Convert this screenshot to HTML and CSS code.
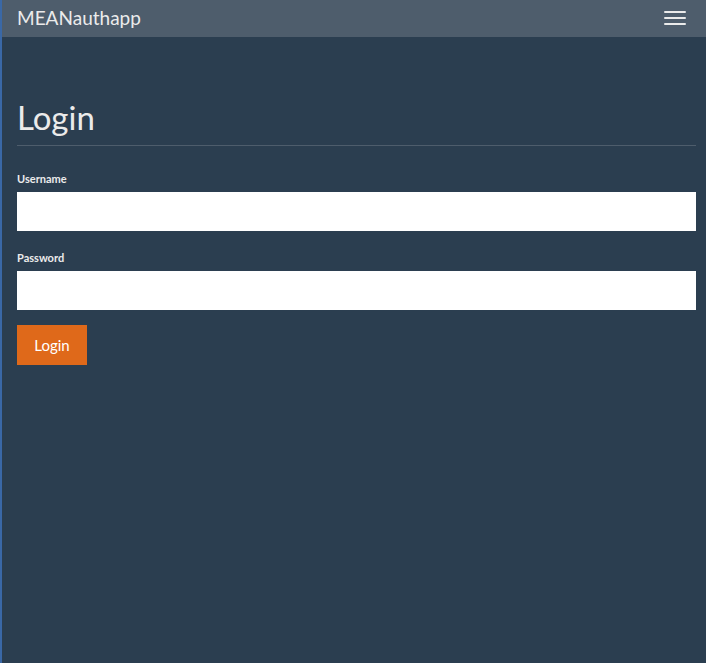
FILE: index.html
```html
<!DOCTYPE html>
<html>
<head>
<meta charset="utf-8">
<link rel="stylesheet" href="styles.css">
</head>
<body>
<div class="page">
  <nav class="navbar">
    <span class="brand">MEANauthapp</span>
    <button class="toggle" aria-label="menu"><span></span><span></span><span></span></button>
  </nav>
  <main class="content">
    <h1 class="title">Login</h1>
    <form class="form">
      <label class="label">Username</label>
      <input class="input" type="text">
      <label class="label">Password</label>
      <input class="input" type="password">
      <button class="btn" type="button">Login</button>
    </form>
  </main>
</div>
</body>
</html>
```
FILE: styles.css
```css
html, body { margin: 0; padding: 0; height: 100%; }
body {
  background: #2b3e50;
  font-family: Lato, "Open Sans", sans-serif;
  color: #ebebeb;
}
.page {
  min-height: 100%;
  border-left: 2px solid #3a68a6;
  box-sizing: border-box;
}
.navbar {
  height: 37px;
  background: #4e5d6c;
  display: flex;
  align-items: center;
  justify-content: space-between;
  padding: 0 20px 0 15px;
}
.brand {
  font-size: 19px;
  color: #ebebeb;
  padding-bottom: 2px;
}
.toggle {
  background: none;
  border: 0;
  padding: 0;
  width: 22px;
  display: flex;
  flex-direction: column;
  gap: 4px;
  margin-bottom: 1px;
}
.toggle span {
  display: block;
  height: 2px;
  background: #ebebeb;
  border-radius: 1px;
}
.content {
  padding: 0 10px 0 15px;
}
.title {
  font-size: 33px;
  font-weight: 400;
  margin: 62px 0 0;
  padding-bottom: 10px;
  line-height: 1.1;
  border-bottom: 1px solid #4e5d6c;
}
.form {
  display: flex;
  flex-direction: column;
  align-items: flex-start;
  padding-top: 25px;
}
.label {
  font-size: 11px;
  font-weight: 700;
  margin-bottom: 6px;
  line-height: 15px;
}
.input {
  width: 100%;
  box-sizing: border-box;
  height: 39px;
  border: 0;
  border-radius: 0;
  background: #fff;
  margin-bottom: 19px;
  padding: 8px 12px;
  font-family: inherit;
  font-size: 15px;
}
.btn {
  margin-top: -4px;
  background: #df691a;
  color: #fff;
  border: 0;
  border-radius: 0;
  font-family: Lato, sans-serif;
  font-size: 15px;
  width: 70px;
  height: 40px;
  padding: 0;
}
```
